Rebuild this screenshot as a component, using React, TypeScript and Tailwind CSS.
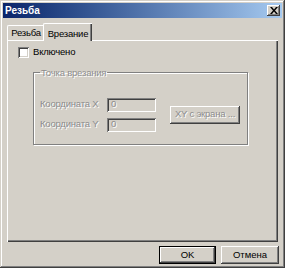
import React from 'react';

const bevelOut =
  'shadow-[inset_-1px_-1px_#404040,inset_1px_1px_#ffffff,inset_-2px_-2px_#808080,inset_2px_2px_#d4d0c8]';
const bevelIn =
  'shadow-[inset_1px_1px_#808080,inset_-1px_-1px_#ffffff,inset_2px_2px_#404040,inset_-2px_-2px_#d4d0c8]';

const DisabledText: React.FC<{ children: React.ReactNode }> = ({ children }) => (
  <span className="text-[#8c8c8c] [text-shadow:1px_1px_0_#ffffff]">{children}</span>
);

const App: React.FC = () => {
  return (
    <div className="w-[285px] h-[268px] bg-[#d4d0c8] font-['Liberation_Sans',Arial,sans-serif] text-[9.5px] text-black">
      <div className="w-full h-full flex flex-col p-[3px] shadow-[inset_-1px_-1px_#404040,inset_1px_1px_#d4d0c8,inset_-2px_-2px_#808080,inset_2px_2px_#ffffff]">
        {/* Title bar */}
        <div className="h-[15px] flex items-center justify-between pl-[2px] pr-[2px] bg-gradient-to-r from-[#0a246a] to-[#a6caf0]">
          <span className="text-white font-bold text-[10px] leading-none">Резьба</span>
          <div className={`w-[13px] h-[11px] bg-[#d4d0c8] flex items-center justify-center ${bevelOut}`}>
            <svg width="8" height="7" viewBox="0 0 8 7">
              <path d="M0 0h2l2 2.5L6 0h2L5 3.5 8 7H6L4 4.5 2 7H0l3-3.5z" fill="#000" />
            </svg>
          </div>
        </div>

        {/* Tabs */}
        <div className="flex items-end pl-[4px] pr-[4px] mt-[4px] h-[18px]">
          <div className="h-[15px] w-[37px] flex items-center justify-center tracking-[-0.2px] border-t border-l border-white rounded-tl-[2px] shadow-[inset_-1px_0_#808080]">
            Резьба
          </div>
          <div className="h-[18px] w-[49px] -ml-[1px] flex items-start justify-center pt-[3px] tracking-[-0.2px] bg-[#d4d0c8] border-t border-l border-white rounded-tl-[2px] shadow-[inset_-1px_0_#404040,inset_-2px_0_#808080] relative z-10 -mb-[1px]">
            Врезание
          </div>
        </div>

        {/* Panel */}
        <div className="mx-[4px] h-[202px] flex flex-col border-l border-t border-white shadow-[inset_-1px_-1px_#404040,inset_-2px_-2px_#808080]">
          <label className="flex items-center mt-[6px] ml-[10px] h-[11px]">
            <span className={`w-[11px] h-[11px] bg-white ${bevelIn}`} />
            <span className="ml-[4px] tracking-[-0.2px]">Включено</span>
          </label>

          <fieldset className="ml-[25px] mt-[10px] w-[215px] h-[77px] border border-[#808080] shadow-[1px_1px_#ffffff,inset_1px_1px_#ffffff] px-[6px]">
            <legend className="px-[1px] leading-none tracking-[-0.2px]">
              <DisabledText>Точка врезания</DisabledText>
            </legend>
            <div className="flex items-center mt-[20px] tracking-[-0.2px]">
              <div className="flex flex-col gap-[6px]">
                <div className="flex items-center h-[14px]">
                  <span className="w-[67px]"><DisabledText>Координата X</DisabledText></span>
                  <div className={`w-[49px] h-[14px] pl-[4px] flex items-center ${bevelIn}`}>
                    <DisabledText>0</DisabledText>
                  </div>
                </div>
                <div className="flex items-center h-[14px]">
                  <span className="w-[67px]"><DisabledText>Координата Y</DisabledText></span>
                  <div className={`w-[49px] h-[14px] pl-[4px] flex items-center ${bevelIn}`}>
                    <DisabledText>0</DisabledText>
                  </div>
                </div>
              </div>
              <div className={`ml-[14px] w-[70px] h-[18px] flex items-center justify-center ${bevelOut}`}>
                <DisabledText>XY с экрана ...</DisabledText>
              </div>
            </div>
          </fieldset>
        </div>

        {/* Buttons */}
        <div className="flex justify-end gap-[5px] mt-[4px] pr-[3px]">
          <div className="w-[57px] h-[18px] flex items-center justify-center border border-black shadow-[inset_-1px_-1px_#404040,inset_1px_1px_#ffffff,inset_-2px_-2px_#808080]">
            OK
          </div>
          <div className={`w-[58px] h-[18px] flex items-center justify-center ${bevelOut}`}>
            Отмена
          </div>
        </div>
      </div>
    </div>
  );
};

export default App;
